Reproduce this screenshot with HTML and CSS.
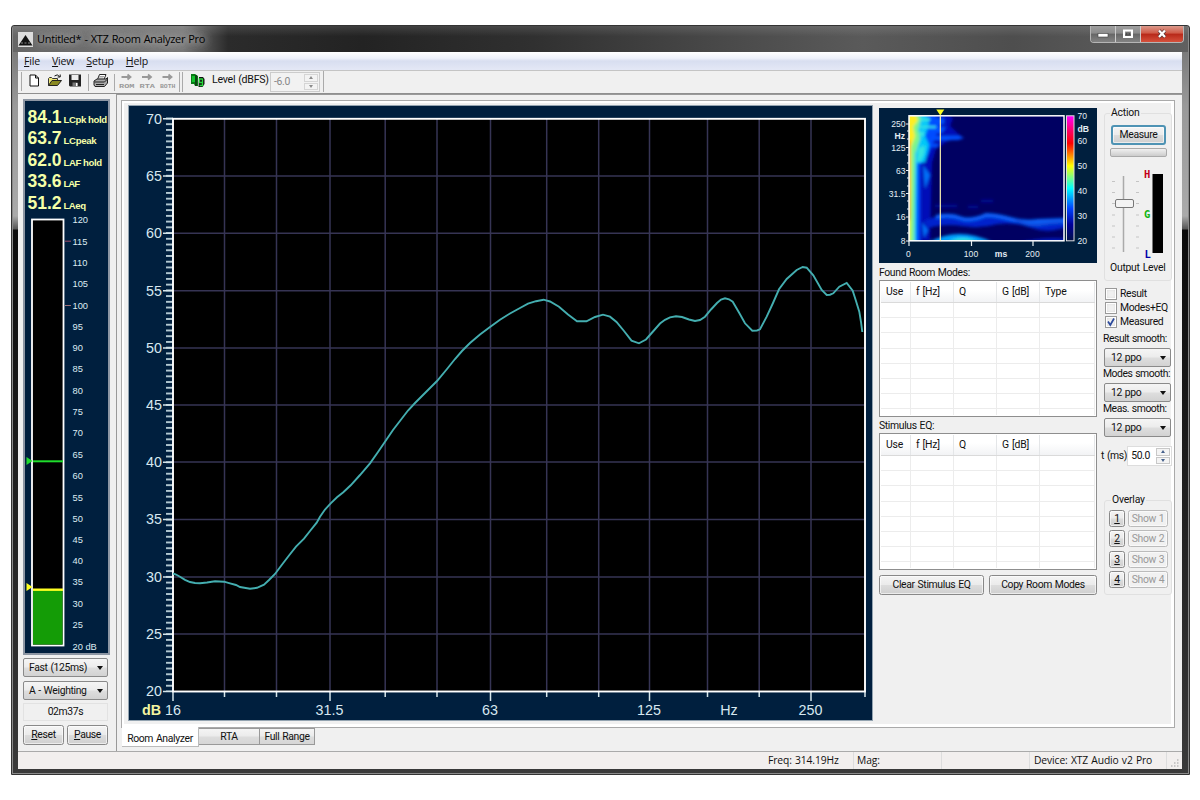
FILE: index.html
```
<!DOCTYPE html>
<html lang="en">
<head>
  <meta charset="UTF-8" />
  <meta name="viewport" content="width=device-width, initial-scale=1.0"/>
  <title>Untitled* - XTZ Room Analyzer Pro</title>
  <link rel="stylesheet" href="styles.css">
</head>
<body>
  <div class="window">
    <header class="titlebar">
      <svg class="app-icon" width="15" height="15" viewBox="0 0 15 15"><rect width="15" height="15" fill="#ddd"/><path d="M7.500 3 L14.500 13.500 H.5 Z" fill="#111"/><path d="M3 11 h2 M6.500 11 h2 M10 11 h2" stroke="#888"/></svg>
      <span class="title">Untitled* - XTZ Room Analyzer Pro</span>
      <div class="win-buttons">
        <span class="wb min"><svg width="12" height="10"><rect x="1" y="4.500" width="10" height="3.500" fill="#fff" stroke="#444" stroke-width=".6"/></svg></span>
        <span class="wb max"><svg width="12" height="10"><rect x="2" y="1.500" width="8" height="6.500" fill="none" stroke="#fff" stroke-width="2"/><rect x="4.500" y="4" width="3" height="2" fill="none" stroke="#444" stroke-width=".7"/></svg></span>
        <span class="wb close"><svg width="12" height="10"><path d="M3 1.500 L9 8 M9 1.500 L3 8" stroke="#533" stroke-width="3.600"/><path d="M3 1.500 L9 8 M9 1.500 L3 8" stroke="#fff" stroke-width="2.300"/></svg></span>
      </div>
    </header>

    <div class="client">
      <nav class="menu">
        <span><u>F</u>ile</span>
        <span><u>V</u>iew</span>
        <span><u>S</u>etup</span>
        <span><u>H</u>elp</span>
      </nav>

      <div class="toolbar">
        <svg class="tools" width="164" height="22" viewBox="20 71 164 22">
          <path d="M21.500 72 v19" stroke="#aaa"/>
          <!-- new -->
          <path d="M30 75 h5.500 l3 3 v8 h-8.500 z M35.500 75 v3 h3" fill="#fff" stroke="#111"/>
          <!-- open -->
          <path d="M48.500 85.500 v-7 l1-1 h2 l1 1 h5 v2" fill="#eee77a" stroke="#333"/>
          <path d="M48.500 85.500 l3.500-5 h9.500 l-4 5 z" fill="#8a8a22" stroke="#222"/>
          <path d="M54.500 76 q3-2.500 5 .5 m.7-2 v2.500 h-2.500" fill="none" stroke="#111"/>
          <!-- save -->
          <path d="M69 74.500 h12 v12 h-11 l-1-1 z" fill="#222"/>
          <rect x="71.500" y="75" width="7" height="5" fill="#eee"/><rect x="72.500" y="82.500" width="5" height="3.500" fill="#777"/><rect x="76" y="83" width="1.500" height="3" fill="#fff"/>
          <path d="M88.500 74 v17" stroke="#aaa"/>
          <!-- print -->
          <path d="M97.500 79.500 l2-5 h6.500 l-2 5" fill="#fff" stroke="#222"/>
          <path d="M99.500 76.500 h4.500 M99 78 h4.500" stroke="#777" stroke-width=".7"/>
          <path d="M94 81 l3-2 h9 l1.500-1.500 v5.500 l-3 3.500 h-9.500 l-1-1.500 z" fill="#aaa" stroke="#222"/>
          <path d="M94.500 82 h10 l3-3 M96 84.500 h8" fill="none" stroke="#222"/>
          <path d="M114.500 74 v17" stroke="#aaa"/>
          <g fill="none" stroke="#999" stroke-width="1.800">
            <path d="M121.500 77 h9 m-3-2.500 l3 2.500 l-3 2.500"/>
            <path d="M142 77 h9 m-3-2.500 l3 2.500 l-3 2.500"/>
            <path d="M162.500 77 h9 m-3-2.500 l3 2.500 l-3 2.500"/>
          </g>
          <g class="tool-text">
            <text x="119" y="87.500" textLength="15.500" lengthAdjust="spacingAndGlyphs">ROM</text>
            <text x="139.500" y="87.500" textLength="15.500" lengthAdjust="spacingAndGlyphs">RTA</text>
            <text x="160" y="87.500" textLength="15.500" lengthAdjust="spacingAndGlyphs">BOTH</text>
          </g>
          <path d="M179.500 72 v20 M182.500 72 v20" stroke="#aaa"/>
        </svg>
        <svg class="gen" width="16" height="16" viewBox="190 73 16 16">
          <path d="M191 74 h4 l3 2 v10 h-3 l-1-2 h-3 z" fill="#087b16"/>
          <path d="M192 76 h3 v6 h-3 z" fill="#14c32e"/><path d="M196 75 v11" stroke="#111"/>
          <path d="M199 77 l4 0 1.500 2 v5 l-2 3 h-4 z" fill="#111"/>
          <path d="M202.500 79 h-3 v3.500 h3 M202.500 78.500 v7 h-3" fill="none" stroke="#29d83c" stroke-width="1.300"/>
        </svg>
        <label class="level">Level (dBFS)</label>
        <span class="spin disabled"><span class="value">-6.0</span><span class="arrows"><i class="up"></i><i class="down"></i></span></span>
        <span class="tool-end"></span>
      </div>

      <main class="work">
        <aside class="meter-col">
          <svg class="meter" width="87" height="556" viewBox="23 99 87 556">
            <rect x="23" y="99" width="87" height="556" fill="#8d96a3"/>
            <rect x="25" y="101" width="83" height="552" fill="#001f3e"/>
            <g class="readout">
              <text class="big" x="27.500" y="122.500" textLength="34">84.1</text><text x="63.500" y="122.500" textLength="43.500">LCpk hold</text>
              <text class="big" x="27.500" y="144" textLength="34">63.7</text><text x="63.500" y="144" textLength="33">LCpeak</text>
              <text class="big" x="27.500" y="165.500" textLength="34">62.0</text><text x="63.500" y="165.500" textLength="38.500">LAF hold</text>
              <text class="big" x="27.500" y="187" textLength="34">33.6</text><text x="63.500" y="187" textLength="16.500">LAF</text>
              <text class="big" x="27.500" y="208.500" textLength="34">51.2</text><text x="63.500" y="208.500" textLength="22.500">LAeq</text>
            </g>
            <rect x="32" y="219.500" width="31.500" height="426" fill="#000" stroke="#fff" stroke-width="1.800"/>
            <rect x="33" y="590" width="29.500" height="54.500" fill="#149c06"/>
            <path d="M33 589.700 h30" stroke="#ff2" stroke-width="2.400"/>
            <path d="M33 461.300 h30" stroke="#1fdc2c" stroke-width="2"/>
            <path d="M26.500 457 l6 4 -6 4 z" fill="#1fdc2c"/>
            <path d="M26.500 583 l6 4 -6 4 z" fill="#ff2"/>
            <path d="M65 241.200 h6" stroke="#a04c68"/>
            <path d="M65 305.500 h6" stroke="#a07078"/>
            <g class="scale">
              <text x="72.500" y="223">120</text>
              <text x="72.500" y="244.500">115</text>
              <text x="72.500" y="265.800">110</text>
              <text x="72.500" y="287.200">105</text>
              <text x="72.500" y="308.500">100</text>
              <text x="72.500" y="329.900">95</text>
              <text x="72.500" y="350.700">90</text>
              <text x="72.500" y="372">85</text>
              <text x="72.500" y="393.500">80</text>
              <text x="72.500" y="414.800">75</text>
              <text x="72.500" y="436.200">70</text>
              <text x="72.500" y="457.700">65</text>
              <text x="72.500" y="479">60</text>
              <text x="72.500" y="500.500">55</text>
              <text x="72.500" y="521.900">50</text>
              <text x="72.500" y="543.200">45</text>
              <text x="72.500" y="564">40</text>
              <text x="72.500" y="585.200">35</text>
              <text x="72.500" y="606.600">30</text>
              <text x="72.500" y="628">25</text>
              <text x="72.500" y="649.500">20 dB</text>
            </g>
          </svg>
          <div class="combo wide">Fast (125ms)</div>
          <div class="combo wide">A - Weighting</div>
          <div class="elapsed">02m37s</div>
          <div class="meter-buttons">
            <button class="btn"><u>R</u>eset</button>
            <button class="btn"><u>P</u>ause</button>
          </div>
        </aside>

        <section class="tabs">
          <div class="page">
            <svg class="chart" width="745" height="616" viewBox="128 105 745 616">
              <defs>
                <pattern id="minor" x="166" y="115.600" width="8" height="5.730" patternUnits="userSpaceOnUse"><rect y="2" width="8" height="1.700" fill="#c6dbe2"/></pattern>
              </defs>
              <rect x="128" y="105" width="745" height="616" fill="#93a3b0"/>
              <rect x="129" y="106" width="743" height="614" fill="#001f3e"/>
              <rect x="173" y="118.500" width="692" height="573" fill="#000"/>
              <path class="grid" d="M224.500 119 V691 M276.500 119 V691 M330 119 V691 M385.200 119 V691 M437 119 V691 M490.500 119 V691 M546.700 119 V691 M598.700 119 V691 M649.500 119 V691 M707.500 119 V691 M759.200 119 V691 M811 119 V691
                M174 176 H864 M174 233.200 H864 M174 290.800 H864 M174 348 H864 M174 405 H864 M174 462 H864 M174 519.500 H864 M174 577 H864 M174 634 H864"/>
              <rect x="166" y="117" width="7" height="575" fill="url(#minor)"/>
              <path class="major" d="M163 118.800 h10 M163 176 h10 M163 233.300 h10 M163 290.700 h10 M163 348 h10 M163 405 h10 M163 462.200 h10 M163 519.500 h10 M163 577 h10 M163 634.200 h10 M163 691.500 h10
                M173 692 v9 M330 692 v9 M490.500 692 v9 M649.500 692 v9 M811 692 v9 M224.500 692 v5 M276.500 692 v5 M385.200 692 v5 M437 692 v5 M546.700 692 v5 M598.700 692 v5 M707.500 692 v5 M759.200 692 v5 M865 692 v5"/>
              <rect x="173" y="118.800" width="692" height="572.700" fill="none" stroke="#fff" stroke-width="1.900"/>
              <polyline class="curve" points="173,573.500 176,574.500 180,576.700 185,579.800 190,582 195,583 200,583.200 207,582.500 215,581.300 224,581.700 230,583.300 236,585 240,587 250,588.700 257,587.800 264,584.700 269,580 275,574 281.700,565 289,555.500 296,546.700 304,538.700 310,531 316.700,522.700 320,516.700 325,509.500 330.700,503.300 337,497.300 343.300,492.300 350.700,485.300 360,475 370,463.300 378,452 385,441.700 393,430 400.700,420 408,410.500 415,403 425,393 437,381 447,369 455,359 462,351 470,343 480,334.500 490,327 500,319.700 510,313.500 520,308 528,303.700 536,301.200 543.500,299.700 550,301.500 559,306.700 568,314.500 577,321.300 586.500,321.300 595,317 603,314.700 610,316.700 616.500,322 624,331 631.500,340.700 639,343.300 646,339.500 653,331.500 660,323.500 665,319.800 670,317.300 676,316.200 682,317 689,319.500 695,321 700,320 705,316.700 711,309.500 717,303 721,299.500 725,298.300 729,299.300 732.700,301.700 739,312.500 745,323.300 752.300,330.700 757,330.500 760,329.300 766.700,316.700 773,303 779,289.300 786.700,279 796.700,270 802.700,267 806.700,267.700 813.300,275.300 821.700,290 826.700,295 830,294.700 833.300,293.300 839.300,286.700 846.700,283 852.700,290.700 856,301 859.300,311.700 861,322 862.300,332"/>
              <g class="axis">
                <text x="162" y="123.500">70</text>
                <text x="162" y="180.800">65</text>
                <text x="162" y="238">60</text>
                <text x="162" y="295.500">55</text>
                <text x="162" y="352.800">50</text>
                <text x="162" y="410">45</text>
                <text x="162" y="467">40</text>
                <text x="162" y="524.300">35</text>
                <text x="162" y="581.800">30</text>
                <text x="162" y="639">25</text>
                <text x="162" y="696">20</text>
              </g>
              <g class="axis mid">
                <text class="unit" x="151.500" y="715.300">dB</text>
                <text x="173" y="715.300">16</text>
                <text x="329.500" y="715.300">31.5</text>
                <text x="490" y="715.300">63</text>
                <text x="649" y="715.300">125</text>
                <text x="729" y="715.300">Hz</text>
                <text x="810.500" y="715.300">250</text>
              </g>
            </svg>

            <div class="modes-col">
              <svg class="decay" width="218" height="155" viewBox="879 108 218 155">
                <defs>
                  <clipPath id="plot"><rect x="909" y="116" width="155" height="125"/></clipPath>
                  <filter id="soft" x="-20%" y="-20%" width="140%" height="140%"><feGaussianBlur stdDeviation="1.500"/></filter>
                  <linearGradient id="heat" x2="0" y2="1">
                    <stop offset="0" stop-color="#f0f"/><stop offset=".12" stop-color="#f06"/><stop offset=".22" stop-color="#f00"/><stop offset=".4" stop-color="#ff0"/><stop offset=".58" stop-color="#0ff"/><stop offset=".74" stop-color="#04f"/><stop offset=".87" stop-color="#009"/><stop offset="1" stop-color="#001048"/>
                  </linearGradient>
                </defs>
                <rect x="879" y="108" width="218" height="155" fill="#001f3e"/>
                <g clip-path="url(#plot)">
                  <rect x="909" y="116" width="155" height="125" fill="#000062"/>
                  <g filter="url(#soft)">
                    <path d="M905 112 h38 l10 6 -3 8 12 11 -14 4 -12 8 -4 14 -2 78 h-25 z" fill="#0010b8"/>
                    <path d="M905 112 h29 l6 13 -6 16 -6 14 -8 10 v80 h-15 z" fill="#0048ff"/>
                    <path d="M930 118 h14 v6 h-18 z M926 127 h20 l-4 6 h-18 z M932 136 h28 l4 2 -6 2 h-30 z M926 144 h12 v3 h-12 z" fill="#0050ff"/>
                    <path d="M922 222 l6 8 -4 8 z M923 165 l7 10 -5 14 z" fill="#0070f8"/>
                    <path d="M905 112 h20 l4 12 -4 12 4 9 -4 17 -8 1 -1 82 h-11 z" fill="#00c8f8"/>
                    <path d="M914 118 h16 v3 h-16 z M915 126 h21 v2 h-21 z M914 132 h10 v4 h-10 z M918 148 l7 -2 -1 8 -4 8 h-3 z" fill="#36e4e0"/>
                    <path d="M905 112 h13 l3 7 -3 10 2 10 -5 15 -1 90 h-9 z" fill="#7ff58a"/>
                    <path d="M905 112 h9 l4 8 -5 7 2 9 -4 11 v40 l-1 54 h-5 z" fill="#ffee20"/>
                    <path d="M906 140 h4 v80 h-4 z" fill="#ff8a10"/>
                    <path d="M924 221 q16-8 30-4 t28 0 30 2 q18 6 54-1 v9 q-18 7-34 1 t-34-4 q-18 5-36 2 t-34 2 z" fill="#0024cc"/>
                    <path d="M936 217 q14-3 24 1 t26-3 q10 0 24 4 t28 2 l28-1" fill="none" stroke="#0860f8" stroke-width="4"/>
                    <path d="M1015 219 q12 8 28 5 t25-1" fill="none" stroke="#0850e0" stroke-width="3"/>
                    <path d="M935 206 h22 M968 207 h10 M981 201 h12" stroke="#000c90" stroke-width="3"/>
                    <path d="M930 242 q28-16 62 0 z" fill="#00a0ff"/>
                    <path d="M948 242 q14-8 30 0 z" fill="#30e8e0"/>
                    <path d="M1020 242 q28-6 48-3 v5 z" fill="#0018b8"/>
                  </g>
                </g>
                <rect x="909" y="115.800" width="155" height="125" fill="none" stroke="#fff" stroke-width="1.500"/>
                <path d="M940.300 116 v125" stroke="#fff6b0" stroke-width="1.200"/>
                <path d="M936.300 109.500 h8 l-4 6 z" fill="#ff2"/>
                <rect x="1066.500" y="115.800" width="7.500" height="125" fill="url(#heat)" stroke="#ddd"/>
                <path class="tick" d="M906 124 h3 M906 147.500 h3 M906 170.500 h3 M906 193.500 h3 M906 217 h3 M906 241 h3 M907 131 h2 M907 139 h2 M907 155 h2 M907 163 h2 M907 178 h2 M907 186 h2 M907 201 h2 M907 209 h2 M907 225 h2 M907 233 h2 M909 241 v5 M971.500 241 v5 M1033 241 v5"/>
                <g class="small end">
                  <text x="905.500" y="127">250</text>
                  <text class="strong" x="905" y="139">Hz</text>
                  <text x="905.500" y="150.500">125</text>
                  <text x="905.500" y="173.500">63</text>
                  <text x="905.500" y="196.500">31.5</text>
                  <text x="905.500" y="220">16</text>
                  <text x="905.500" y="244">8</text>
                </g>
                <g class="small mid">
                  <text x="908.500" y="256.500">0</text>
                  <text x="971" y="256.500">100</text>
                  <text class="strong" x="1001" y="256.500">ms</text>
                  <text x="1032.500" y="256.500">200</text>
                </g>
                <g class="small">
                  <text x="1077.500" y="119">70</text>
                  <text class="strong" x="1077.500" y="132">dB</text>
                  <text x="1077.500" y="144">60</text>
                  <text x="1077.500" y="169">50</text>
                  <text x="1077.500" y="193.500">40</text>
                  <text x="1077.500" y="218.500">30</text>
                  <text x="1077.500" y="244">20</text>
                </g>
              </svg>

              <div class="caption">Found Room Modes:</div>
              <div class="list">
                <div class="list-head"><span>Use</span><span>f [Hz]</span><span>Q</span><span>G [dB]</span><span>Type</span></div>
                <div class="list-body"><i></i><i></i><i></i><i></i><i></i></div>
              </div>
              <div class="caption second">Stimulus EQ:</div>
              <div class="list">
                <div class="list-head"><span>Use</span><span>f [Hz]</span><span>Q</span><span>G [dB]</span><span></span></div>
                <div class="list-body"><i></i><i></i><i></i><i></i><i></i></div>
              </div>
              <div class="list-buttons">
                <button class="btn">Clear Stimulus EQ</button>
                <button class="btn">Copy Room Modes</button>
              </div>
            </div>

            <div class="controls">
              <fieldset class="group action">
                <legend>Action</legend>
                <button class="btn measure">Measure</button>
                <div class="progress"></div>
                <svg class="slider" width="60" height="100" viewBox="1108 162 60 100">
                  <path d="M1112 181.500 h3 M1112 192.500 h3 M1112 203.500 h3 M1112 215 h3 M1112 226 h3 M1112 237 h3 M1112 248 h3 M1136 181.500 h3 M1136 192.500 h3 M1136 203.500 h3 M1136 215 h3 M1136 226 h3 M1136 237 h3 M1136 248 h3" stroke="#c4c4c4"/>
                  <path d="M1123.500 176 v76" stroke="#aaa" stroke-width="1.500"/>
                  <rect x="1115.500" y="199.500" width="18" height="8" rx="1.500" fill="#f3f3f3" stroke="#777"/>
                  <rect x="1152.500" y="174" width="10.500" height="79" fill="#000"/>
                  <g class="hgl">
                    <text x="1144" y="177.500" fill="#c4001a">H</text>
                    <text x="1144" y="218" fill="#12b512">G</text>
                    <text x="1144.500" y="257.500" fill="#0000a8">L</text>
                  </g>
                </svg>
                <div class="out-label">Output Level</div>
              </fieldset>

              <div class="checks">
                <label><i class="box"></i>Result</label>
                <label><i class="box"></i>Modes+EQ</label>
                <label><i class="box"><svg width="10" height="10"><path d="M2 4.500 L4.300 8 L8 1.500" fill="none" stroke="#2c4a9c" stroke-width="1.700"/></svg></i>Measured</label>
              </div>

              <div class="smooth">
                <label>Result smooth:</label>
                <div class="combo">12 ppo</div>
                <label>Modes smooth:</label>
                <div class="combo">12 ppo</div>
                <label>Meas. smooth:</label>
                <div class="combo">12 ppo</div>
              </div>

              <div class="time">
                <label>t (ms)</label>
                <span class="spin"><span class="value">50.0</span><span class="arrows"><i class="up"></i><i class="down"></i></span></span>
              </div>

              <fieldset class="group overlay">
                <legend>Overlay</legend>
                <button class="btn num"><u>1</u></button><button class="btn show">Show 1</button>
                <button class="btn num"><u>2</u></button><button class="btn show">Show 2</button>
                <button class="btn num"><u>3</u></button><button class="btn show">Show 3</button>
                <button class="btn num"><u>4</u></button><button class="btn show">Show 4</button>
              </fieldset>
            </div>
          </div>
          <div class="tab-row">
            <span class="tab active">Room Analyzer</span>
            <span class="tab rta">RTA</span>
            <span class="tab full">Full Range</span>
          </div>
        </section>
      </main>

      <footer class="status">
        <span class="freq">Freq: 314.19Hz</span>
        <span class="mag">Mag:</span>
        <span class="blank"></span>
        <span class="device">Device: XTZ Audio v2 Pro</span>
        <span class="grip"><svg width="10" height="10"><path d="M7 2 h1.500 M4 5 h1.500 M7 5 h1.500 M1 8 h1.500 M4 8 h1.500 M7 8 h1.500" stroke="#bbb" stroke-width="1.500"/></svg></span>
      </footer>
    </div>
  </div>
</body>
</html>
```

FILE: styles.css
```
*, *::before, *::after {
  box-sizing: border-box;
}
body {
  margin: 0;
  padding: 25px 0 0 11px;
  height: 800px;
  overflow: hidden;
  background: #fff;
  color: #111;
  font-family: Roboto, "Liberation Sans", sans-serif;
  font-size: 10.4px;
  letter-spacing: -0.35px;
  word-spacing: 0.6px;
  line-height: 14px;
  white-space: nowrap;
}
svg {
  display: block;
  flex: none;
  letter-spacing: 0;
  word-spacing: 0;
}
i {
  font-style: normal;
}

/* Window frame */
.window {
  width: 1179px;
  height: 750px;
  padding: 0 7px 5px 6px;
  border: 1px solid #333;
  border-radius: 3px 3px 0 0;
  background: linear-gradient(#6c6c6c 0, #999 80px, #aaa 190px, #555 203px, #0c0c0c 204px, #222 500px, #3a3a3a 100%);
  box-shadow: inset 0 0 0 1px #8a8a8a;
}
.titlebar {
  height: 26px;
  margin: 0 -6px 0 -5px;
  padding-left: 5px;
  display: flex;
  background: linear-gradient(rgba(255,255,255,0.12), rgba(255,255,255,0) 40%), linear-gradient(90deg, #666 0, #777 170px, #2b2b2b 215px, #232323 350px, #303030 520px, #484848 700px, #5a5a5a 850px, #4e4e4e 1000px, #606060 100%);
}
.app-icon {
  margin-top: 6px;
}
.title {
  margin: 5px 0 0 4px;
  font: 11px/15px "Open Sans", sans-serif;
  letter-spacing: -0.32px;
  color: #000;
  text-shadow: 0 0 8px #ccc, 0 0 8px #bbb;
}
.win-buttons {
  display: flex;
  height: 17px;
  margin-left: auto;
  margin-right: 4px;
  border: 1px solid #b5b5b5;
  border-top: none;
  border-radius: 0 0 4px 4px;
  overflow: hidden;
}
.wb {
  width: 25px;
  display: flex;
  align-items: center;
  justify-content: center;
  background: linear-gradient(#a0a0a0, #8b8b8b 45%, #666 50%, #838383);
  border-right: 1px solid #ccc;
}
.wb.close {
  width: 42px;
  border: none;
  background: linear-gradient(#dc9a8c, #cf5946 45%, #b72818 50%, #d6513c);
}

.client {
  height: 717px;
  display: flex;
  flex-direction: column;
  background: #f0f0f0;
}
.menu {
  height: 19px;
  display: flex;
  padding: 1px 0 0 6px;
  gap: 12px;
  font: 10.6px/17px "Open Sans", sans-serif;
  letter-spacing: -0.2px;
  background: linear-gradient(#fff, #eef1fa 35%, #d8def0 50%, #e4e8f6);
  border-bottom: 1px solid #c4c4c4;
}
.toolbar {
  height: 23px;
  display: flex;
  align-items: flex-start;
  padding-left: 2px;
  border-bottom: 1px solid #8f8f8f;
}
.tool-text {
  font: bold 6px "Liberation Mono", monospace;
  fill: #999;
}
.gen {
  margin: 2px 0 0 6px;
}
.level {
  margin: 2px 2px 0 6px;
  width: 56px;
  font-size: 10.6px;
  letter-spacing: -0.25px;
}
.spin {
  display: flex;
  width: 50px;
  height: 20px;
  padding: 1px;
  background: #fff;
  border: 1px solid #ddd;
}
.spin .value {
  flex: 1;
  padding: 1px 0 0 2px;
}
.spin.disabled {
  margin-top: 1px;
  background: #f2f2f2;
  border-color: #ccc;
  color: #888;
}
.arrows {
  display: flex;
  flex-direction: column;
  gap: 1px;
}
.arrows i {
  width: 14px;
  flex: 1;
  display: flex;
  align-items: center;
  justify-content: center;
  border: 1px solid #c8c8c8;
  background: #f4f4f4;
}
.arrows i::after {
  content: "";
  border: 2.5px solid transparent;
}
.arrows .up::after {
  border-top: none;
  border-bottom: 3px solid #46618c;
}
.arrows .down::after {
  border-bottom: none;
  border-top: 3px solid #46618c;
}
.disabled .arrows i {
  filter: grayscale(1) opacity(0.7);
}
.tool-end {
  height: 21px;
  margin-left: 3px;
  border-left: 1px solid #aaa;
}

/* Work area */
.work {
  flex: 1;
  display: flex;
}
.meter-col {
  width: 100px;
  padding: 5px 0 0 5px;
  display: flex;
  flex-direction: column;
  border-right: 1px solid #999;
}
.readout {
  font: bold 9.6px "Liberation Sans", sans-serif;
  fill: #f5ffa8;
}
.readout .big {
  font-size: 17.5px;
}
.scale {
  font: 9.3px "Liberation Sans", sans-serif;
  fill: #dcebf2;
}
.combo {
  position: relative;
  width: 67px;
  height: 19px;
  padding: 2px 0 0 6px;
  border: 1px solid #8a8a8a;
  border-radius: 2px;
  background: linear-gradient(#f5f5f5, #ececec 48%, #dedede 52%, #d2d2d2);
}
.combo::after {
  content: "";
  position: absolute;
  right: 4px;
  top: 7px;
  border: 3.5px solid transparent;
  border-top: 4px solid #111;
  border-bottom: none;
}
.combo.wide {
  width: 85px;
  padding-left: 5px;
  margin-top: 4px;
}
.meter + .combo.wide {
  margin-top: 3px;
}
.elapsed {
  width: 85px;
  height: 18px;
  margin-top: 3px;
  padding-top: 1px;
  text-align: center;
  border: 1px solid #e2e2e2;
}
.meter-buttons {
  display: flex;
  gap: 3px;
  margin-top: 4px;
}
.btn {
  height: 20px;
  padding: 0;
  font: inherit;
  letter-spacing: inherit;
  word-spacing: inherit;
  color: #111;
  border: 1px solid #888;
  border-radius: 2.5px;
  background: linear-gradient(#f4f4f4, #ebebeb 48%, #dcdcdc 52%, #cfcfcf);
  box-shadow: inset 0 0 0 1px rgba(255,255,255,0.6);
}
.meter-buttons .btn {
  width: 41px;
}

.tabs {
  flex: 1;
  padding: 5px 7px 0 4px;
  border-top: 1px solid #999;
}
.page {
  display: flex;
  width: 1054px;
  height: 628px;
  padding: 4px 0 0 6px;
  border: 1px solid #aaa;
  box-shadow: inset 2px 2px #fff, inset -3px -3px #fff;
}
.grid {
  stroke: #363454;
  stroke-width: 1.5;
  fill: none;
}
.major {
  stroke: #d5e5ea;
  stroke-width: 1.5;
}
.curve {
  fill: none;
  stroke: #44aeb0;
  stroke-width: 1.9;
}
.axis {
  font: 14.3px "Liberation Sans", sans-serif;
  fill: #d7e8f0;
  text-anchor: end;
}
.axis.mid, .small.mid {
  text-anchor: middle;
}
.axis .unit {
  font-weight: bold;
  fill: #f3f5a0;
}

.modes-col {
  width: 218px;
  margin: 3px 0 0 6px;
}
.tick {
  stroke: #e8f0f4;
  stroke-width: 1.2;
}
.small {
  font: 8.6px "Liberation Sans", sans-serif;
  fill: #e4eef4;
}
.small.end {
  text-anchor: end;
}
.strong {
  font-weight: bold;
}
.caption {
  height: 17px;
  padding-top: 3px;
}
.caption.second {
  height: 16px;
  padding-top: 2px;
}
.list {
  height: 137px;
  padding: 1px;
  background: #fff;
  border: 1px solid #8e8e8e;
}
.list-head, .list-body {
  display: grid;
  grid-template-columns: 30px 43px 43px 43px 1fr;
}
.list-head {
  height: 21px;
  background: linear-gradient(#fff 40%, #f2f3f5);
  border-bottom: 1px solid #dadada;
}
.list-head span {
  padding: 3px 0 0 5px;
  letter-spacing: -0.15px;
  border-right: 1px solid #e4e6e8;
}
.list-body {
  height: 112px;
  background: repeating-linear-gradient(transparent 0 14.2px, #ececec 14.2px 15.2px);
}
.list-body i {
  border-right: 1px solid #ececec;
}
.list-buttons {
  display: flex;
  gap: 5px;
  margin-top: 5px;
}
.list-buttons .btn {
  width: 105px;
}
.list-buttons .btn + .btn {
  width: 108px;
}

/* Right column */
.controls {
  width: 72px;
  margin-left: 4px;
  padding-top: 2px;
}
.group {
  width: 68px;
  margin: 0 0 0 3px;
  padding: 0;
  border: 1px solid #e0e0e0;
  border-radius: 3px;
  min-width: 0;
}
.group legend {
  margin-left: 5px;
  padding: 0 1px;
  height: 12px;
  line-height: 12px;
  letter-spacing: -0.2px;
}
.action {
  height: 174px;
}
.measure {
  display: block;
  width: 55px;
  margin: 6px 0 0 6px;
  border: 2px solid #4e93b4;
  border-radius: 3px;
}
.progress {
  width: 57px;
  height: 9px;
  margin: 3px 0 5px 5px;
  border: 1px solid #aaa;
  border-radius: 2px;
  background: linear-gradient(#f0f0f0, #ccc);
}
.slider {
  margin-left: 3px;
}
.hgl {
  font: bold 10.5px "DejaVu Sans Mono", monospace;
}
.out-label {
  margin: -1px 0 0 5px;
  letter-spacing: -0.25px;
}
.checks {
  margin: 6px 0 0 3px;
}
.checks label {
  display: flex;
  height: 14px;
}
.box {
  width: 12px;
  height: 12px;
  margin: 1px 3px 0 1px;
  border: 1px solid #999;
  background: #f0f0f0;
  box-shadow: inset 0 0 0 1px #fff, inset 0 0 3px #bbb;
}
.smooth {
  margin: 3px 0 0 2px;
}
.smooth label {
  display: block;
  height: 16px;
  letter-spacing: -0.45px;
}
.smooth .combo {
  margin-left: 1px;
}
.time {
  display: flex;
  align-items: center;
  justify-content: space-between;
  margin-top: 9px;
  padding-right: 1px;
}
.time .spin {
  width: 45px;
}
.overlay {
  height: 101px;
  margin-top: 28px;
  padding: 4px 3px 0 4px;
  display: grid;
  grid-template-columns: 16px 40px;
  grid-auto-rows: 17px;
  gap: 3.3px 3px;
  align-content: start;
}
.overlay legend {
  margin-left: 2px;
}
.overlay .btn {
  height: 17px;
  line-height: 13px;
}
.overlay .show {
  color: #999;
  border-color: #bbb;
  background: #f1f1f1;
}

/* Page tabs */
.tab-row {
  display: flex;
  align-items: flex-start;
  margin-left: 1px;
}
.tab {
  height: 17px;
  padding-top: 1px;
  text-align: center;
  border: 1px solid #999;
  border-left: none;
  background: linear-gradient(#f4f4f4, #ececec 45%, #dcdcdc 55%, #d6d6d6);
}
.tab.active {
  width: 77px;
  height: 20px;
  margin-top: -1px;
  padding-top: 5px;
  background: #fff;
  border-color: #bbb;
  border-top: none;
}
.rta {
  width: 61px;
}
.full {
  width: 55px;
}

.status {
  height: 18px;
  display: flex;
  font: 10.3px/17px "Open Sans", sans-serif;
  letter-spacing: -0.1px;
  background: #f2efee;
  border-top: 1px solid #aaa;
}
.status span {
  border-right: 1px solid #ddd;
}
.freq {
  width: 836px;
  padding-left: 750px;
}
.mag {
  width: 88px;
  padding-left: 3px;
}
.blank {
  width: 88px;
}
.device {
  width: 137px;
  padding-left: 4px;
}
.status .grip {
  padding: 6px 0 0 3px;
  border: none;
}
```
